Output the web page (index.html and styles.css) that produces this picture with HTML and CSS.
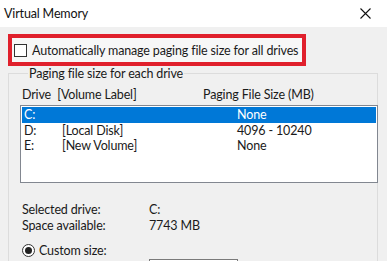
FILE: index.html
```html
<!DOCTYPE html>
<html lang="en">
<head>
  <meta charset="UTF-8">
  <title>Virtual Memory</title>
  <link rel="stylesheet" href="styles.css">
</head>
<body>

<!-- Title bar -->
<div class="titlebar">
  <span class="title">Virtual Memory</span>
  <svg class="close" width="11" height="11" viewBox="0 0 11 11">
    <path d="M0.5 0.5 L10.5 10.5 M10.5 0.5 L0.5 10.5" stroke="#111" stroke-width="1.1" fill="none"/>
  </svg>
</div>

<div class="dialog">
  <!-- Auto manage -->
  <div class="highlight">
    <label class="check-row">
      <span class="checkbox"></span>
      <span>Automatically manage paging file size for all drives</span>
    </label>
  </div>

  <!-- Paging file group -->
  <fieldset class="group">
    <legend>Paging file size for each drive</legend>
    <div class="list-head">
      <span>Drive&nbsp; [Volume Label]</span>
      <span>Paging File Size (MB)</span>
    </div>
    <div class="drive-list">
      <div class="drive-row selected"><span>C:</span><span></span><span>None</span></div>
      <div class="drive-row"><span>D:</span><span>[Local Disk]</span><span>4096 - 10240</span></div>
      <div class="drive-row"><span>E:</span><span>[New Volume]</span><span>None</span></div>
    </div>

    <div class="info">
      <div class="info-row"><span>Selected drive:</span><span>C:</span></div>
      <div class="info-row"><span>Space available:</span><span>7743 MB</span></div>
    </div>

    <div class="custom-row">
      <span class="radio"><span class="dot"></span></span>
      <span>Custom size:</span>
    </div>
    <div class="size-row">
      <span></span>
      <span class="textbox"></span>
    </div>
  </fieldset>
</div>

</body>
</html>
```

FILE: styles.css
```css
/* Base */
* {
  margin: 0;
  padding: 0;
  box-sizing: border-box;
}

html, body {
  height: 100%;
  overflow: hidden;
}

body {
  font-family: 'Lato', 'Noto Sans', sans-serif;
  font-size: 12.5px;
  letter-spacing: -0.15px;
  color: #1a1a1a;
  background-color: #f0f0f0;
  white-space: nowrap;
}

/* Title bar */
.titlebar {
  height: 27px;
  background: #ffffff;
  display: flex;
  align-items: center;
  justify-content: space-between;
  padding: 0 16px 0 4px;
}

.title {
  color: #111;
}

/* Dialog body */
.dialog {
  padding: 7px 9px 0 8px;
}

.highlight {
  width: 298px;
  height: 32px;
  border: 4px solid #e0202c;
  background: #f7f7f7;
  display: flex;
  align-items: center;
  padding-left: 2px;
}

.check-row {
  display: flex;
  align-items: center;
  gap: 5px;
}

.checkbox {
  width: 13px;
  height: 13px;
  border: 1px solid #333;
  background: #fff;
}

/* Group box */
.group {
  border: 1px solid #dcdcdc;
  padding: 2px 0 0 11px;
  margin-top: 0;
  height: 200px;
}

.group legend {
  margin-left: 8px;
  padding: 0 1px;
  line-height: 15px;
}

.list-head {
  display: flex;
  padding-left: 2px;
  height: 22px;
  align-items: center;
}

.list-head span:first-child {
  width: 181px;
}

.drive-list {
  background: #fff;
  border: 1px solid #828790;
  height: 78px;
  margin-right: -1px;
  padding: 1px 1px 0 1px;
}

.drive-row {
  display: grid;
  grid-template-columns: 38px 175px 1fr;
  height: 15.5px;
  line-height: 15px;
  padding-left: 2px;
}

.drive-row.selected {
  background: #0078d7;
  color: #fff;
}

.info {
  margin-top: 19px;
  padding-left: 2px;
}

.info-row {
  display: grid;
  grid-template-columns: 127px 1fr;
  line-height: 16px;
}

.custom-row {
  display: flex;
  align-items: center;
  gap: 4px;
  margin-top: 9px;
  padding-left: 2px;
}

.radio {
  width: 13px;
  height: 13px;
  border: 1px solid #333;
  border-radius: 50%;
  background: #fff;
  display: flex;
  align-items: center;
  justify-content: center;
}

.dot {
  width: 7px;
  height: 7px;
  border-radius: 50%;
  background: #222;
}

.size-row {
  display: grid;
  grid-template-columns: 127px 89px;
  margin-top: 1px;
  padding-left: 2px;
}

.textbox {
  height: 20px;
  border: 1px solid #7a7a7a;
  background: #fff;
}
```
